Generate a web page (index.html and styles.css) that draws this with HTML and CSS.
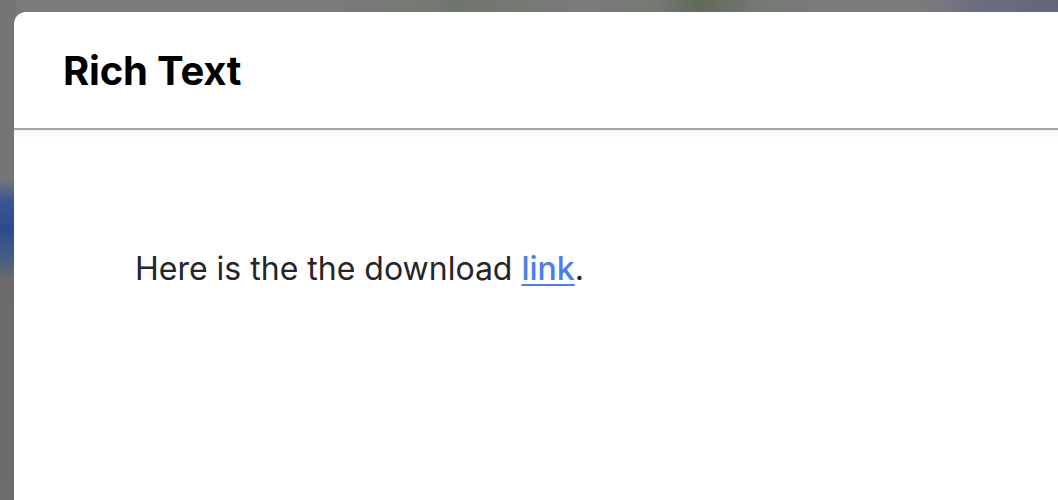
FILE: index.html
```html
<!DOCTYPE html>
<html lang="en">
<head>
<meta charset="utf-8">
<title>Rich Text</title>
<link rel="stylesheet" href="styles.css">
</head>
<body>
<div class="backdrop">
  <div class="top-blur"></div>
  <div class="side-blur"></div>
  <div class="modal">
    <header class="modal-header">
      <h1 class="modal-title">Rich Text</h1>
    </header>
    <div class="modal-body">
      <p class="rich-text">Here is the the download <a href="#" class="link">link</a>.</p>
    </div>
  </div>
</div>
</body>
</html>
```
FILE: styles.css
```css
* { box-sizing: border-box; }
html, body { margin: 0; padding: 0; }
body {
  width: 1058px;
  height: 500px;
  overflow: hidden;
  background: #7b7b7b;
  font-family: Inter, "Noto Sans", sans-serif;
}
.backdrop {
  position: relative;
  width: 1058px;
  height: 500px;
  padding: 12px 0 0 14px;
  overflow: hidden;
}
.top-blur {
  position: absolute;
  left: 0; top: 0; right: 0;
  height: 14px;
  background: linear-gradient(90deg, #7b7b7b 0%, #7b7b7b 30%, #747a72 40%, #6d766c 43%, #757a73 50%, #7b7b7b 55%, #747a72 62%, #5e6a5a 66%, #747a72 72%, #7b7b7b 78%, #7a7a7c 88%, #6c6e80 92%, #63667a 100%);
}
.side-blur {
  position: absolute;
  left: 0; top: 0; bottom: 0;
  width: 16px;
  background: linear-gradient(180deg, #757575 0%, #757575 36%, #3a5796 40%, #2c4b8e 46%, #4a5e84 52%, #6a6a6a 56%, #6c6c6c 100%);
}
.modal {
  position: relative;
  width: 1100px;
  height: 520px;
  background: #ffffff;
  border-top-left-radius: 12px;
  overflow: hidden;
}
.modal-header {
  height: 118px;
  padding: 0 0 0 49px;
  display: flex;
  align-items: center;
  border-bottom: 2px solid #a4a4a4;
}
.modal-title {
  margin: 0;
  font-size: 40px;
  font-weight: 700;
  color: #000;
  letter-spacing: -0.2px;
}
.modal-body {
  height: 400px;
  padding: 120px 0 0 121px;
  box-shadow: inset 0 10px 8px -8px rgba(0,0,0,0.06);
}
.rich-text {
  margin: 0;
  font-size: 32px;
  color: #262626;
  line-height: 1.2;
}
.link {
  color: #4a7ef0;
  font-weight: 500;
  text-decoration: underline;
  text-underline-offset: 4px;
  text-decoration-thickness: 2px;
}
```
